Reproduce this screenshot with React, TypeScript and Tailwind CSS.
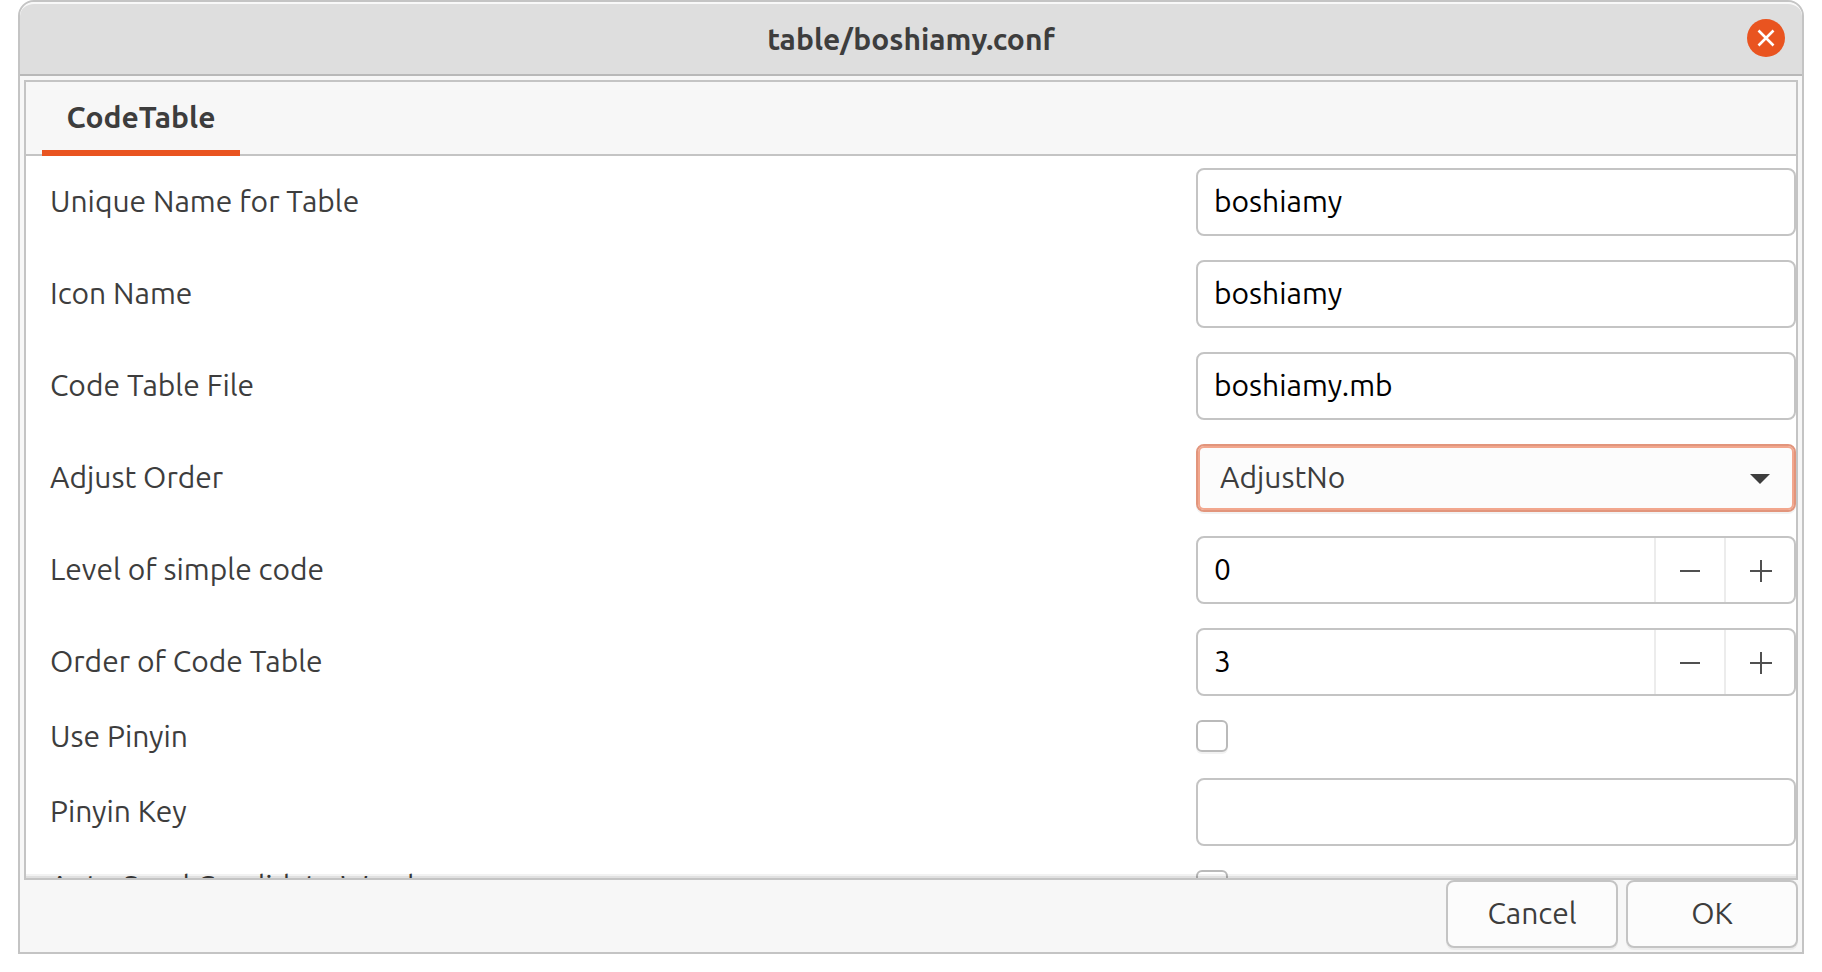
import { useState } from "react";
import type { ReactNode } from "react";

function Row({ id, label, short = false, children }: { id: string; label: string; short?: boolean; children: ReactNode }) {
  return (
    <div className="grid grid-cols-[minmax(0,1fr)_600px] py-3 pl-6">
      <label
        htmlFor={id}
        className={`flex items-center whitespace-nowrap pb-[2px] ${short ? "h-[34px]" : "h-[68px]"}`}
      >
        {label}
      </label>
      {children}
    </div>
  );
}

function TextRow({ id, label, value = "" }: { id: string; label: string; value?: string }) {
  return (
    <Row id={id} label={label}>
      <input
        id={id}
        type="text"
        defaultValue={value}
        className="h-[68px] w-full rounded-lg border-2 border-[#c4c4c4] bg-white px-4 pb-[2px] text-black outline-none"
      />
    </Row>
  );
}

function SpinRow({ id, label, initial }: { id: string; label: string; initial: number }) {
  const [value, setValue] = useState(initial);
  return (
    <Row id={id} label={label}>
      <div className="flex h-[68px] overflow-hidden rounded-lg border-2 border-[#c4c4c4] bg-white">
        <input
          id={id}
          type="text"
          inputMode="numeric"
          value={value}
          onChange={(e) => setValue(Number(e.target.value) || 0)}
          className="min-w-0 flex-1 bg-transparent px-4 pb-[2px] text-black outline-none"
        />
        <button
          type="button"
          aria-label={`Decrease ${label}`}
          onClick={() => setValue(Math.max(0, value - 1))}
          className="flex w-[70px] items-center justify-center border-l-2 border-[#ececec]"
        >
          <svg width="24" height="24" fill="#505050" shapeRendering="crispEdges">
            <rect x="2" y="12" width="20" height="2" />
          </svg>
        </button>
        <button
          type="button"
          aria-label={`Increase ${label}`}
          onClick={() => setValue(value + 1)}
          className="flex w-[70px] items-center justify-center border-l-2 border-[#ececec]"
        >
          <svg width="24" height="24" fill="#505050" shapeRendering="crispEdges">
            <rect x="2" y="12" width="22" height="2" />
            <rect x="12" y="2" width="2" height="22" />
          </svg>
        </button>
      </div>
    </Row>
  );
}

function CheckRow({ id, label }: { id: string; label: string }) {
  return (
    <Row id={id} label={label} short>
      <input
        id={id}
        type="checkbox"
        className="size-8 appearance-none rounded-md border-2 border-[#bababa] bg-white shadow-[0_2px_0_#f2f2f2] checked:bg-[#e95420]"
      />
    </Row>
  );
}

function DialogButton({ children }: { children: ReactNode }) {
  return (
    <button
      type="button"
      className="h-[68px] w-[172px] rounded-lg border-2 border-[#c4c4c4] bg-[#fcfcfc] pb-[2px] shadow-[0_2px_0_#ebebeb]"
    >
      {children}
    </button>
  );
}

export default function App() {
  return (
    <div className="h-screen bg-white px-[18px] pb-[18px] font-[Ubuntu,'Noto_Sans',sans-serif] text-[30px] text-[#3d3d3d]">
      <div className="flex h-full flex-col overflow-hidden rounded-t-2xl border-2 border-[#c4c4c4] bg-[#f7f7f7]">
        <header className="grid h-[74px] shrink-0 grid-cols-[1fr_auto_1fr] items-center rounded-t-[14px] border-b-2 border-t-2 border-b-[#b8b8b8] border-t-[#f8f8f8] bg-[#dedede]">
          <h1 className="col-start-2 font-bold">table/boshiamy.conf</h1>
          <button
            type="button"
            aria-label="Close"
            className="mb-[2px] mr-[17px] flex size-[38px] items-center justify-center justify-self-end rounded-full bg-[#e95420]"
          >
            <svg width="20" height="20" fill="none" stroke="#fff" strokeWidth="2.6">
              <path d="M2.5 2.5l15 15M17.5 2.5l-15 15" />
            </svg>
          </button>
        </header>

        <main className="flex min-h-0 flex-1 flex-col px-1 pt-1">
          <section className="flex min-h-0 flex-1 flex-col border-2 border-[#c4c4c4] bg-white">
            <div role="tablist" className="flex h-[74px] shrink-0 border-b-2 border-[#c4c4c4] bg-[#f7f7f7] px-4">
              <button
                type="button"
                role="tab"
                aria-selected="true"
                className="-mb-[2px] min-w-[198px] border-b-6 border-[#e95420] px-6 pt-[2px] font-bold"
              >
                CodeTable
              </button>
            </div>
            <div className="relative min-h-0 flex-1 overflow-hidden">
              <form>
                <TextRow id="unique-name" label="Unique Name for Table" value="boshiamy" />
                <TextRow id="icon-name" label="Icon Name" value="boshiamy" />
                <TextRow id="code-file" label="Code Table File" value="boshiamy.mb" />
                <Row id="adjust-order" label="Adjust Order">
                  <div className="relative">
                    <select
                      id="adjust-order"
                      defaultValue="AdjustNo"
                      className="h-[68px] w-full appearance-none rounded-lg border-2 border-[#e2957c] bg-[#fcfcfc] px-[22px] pb-[2px] shadow-[inset_0_0_0_2px_#f2a78e,0_2px_0_#f2f2f2] outline-none"
                    >
                      <option>AdjustNo</option>
                      <option>AdjustFast</option>
                      <option>AdjustFreq</option>
                    </select>
                    <svg className="pointer-events-none absolute right-[26px] top-[30px]" width="20" height="10" fill="#3d3d3d">
                      <path d="M0 0h20L10 10z" />
                    </svg>
                  </div>
                </Row>
                <SpinRow id="simple-level" label="Level of simple code" initial={0} />
                <SpinRow id="table-order" label="Order of Code Table" initial={3} />
                <CheckRow id="use-pinyin" label="Use Pinyin" />
                <TextRow id="pinyin-key" label="Pinyin Key" />
                <CheckRow id="auto-send" label="Auto Send Candidate Word" />
              </form>
              <div className="pointer-events-none absolute inset-x-0 bottom-0 h-1 border-b-2 border-black/12 bg-black/5 bg-clip-padding" />
            </div>
          </section>
        </main>

        <footer className="flex shrink-0 justify-end gap-2 px-1 pb-1">
          <DialogButton>Cancel</DialogButton>
          <DialogButton>OK</DialogButton>
        </footer>
      </div>
    </div>
  );
}
